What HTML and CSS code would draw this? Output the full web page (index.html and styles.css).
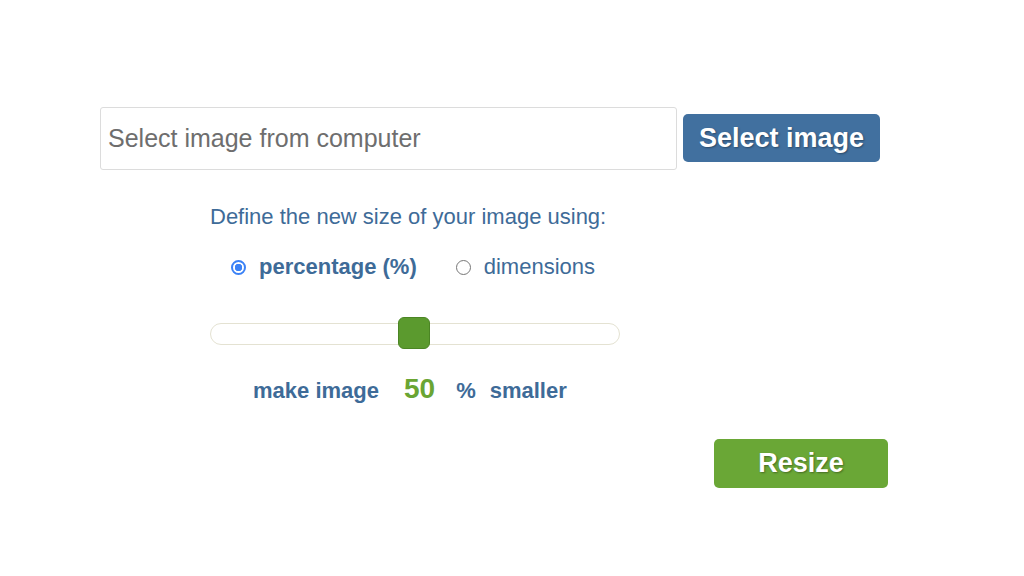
FILE: index.html
```html
<!DOCTYPE html>
<html>
<head>
<meta charset="utf-8">
<link rel="stylesheet" href="styles.css">
</head>
<body>
<div class="page">
  <div class="file-row">
    <div class="file-input">Select image from computer</div>
    <button class="btn btn-blue">Select image</button>
  </div>
  <div class="options">
    <div class="define">Define the new size of your image using:</div>
    <div class="radios">
      <label class="radio-item"><span class="radio checked"></span><span class="bold">percentage (%)</span></label>
      <label class="radio-item second"><span class="radio"></span><span>dimensions</span></label>
    </div>
    <div class="slider">
      <div class="track"></div>
      <div class="thumb"></div>
    </div>
    <div class="result">
      <span class="bold">make image</span>
      <span class="num">50</span>
      <span class="bold">%</span>
      <span class="bold">smaller</span>
    </div>
  </div>
  <div class="actions">
    <button class="btn btn-green">Resize</button>
  </div>
</div>
</body>
</html>
```
FILE: styles.css
```css
html, body {
  margin: 0;
  padding: 0;
  background: #ffffff;
  font-family: "Liberation Sans", Arial, sans-serif;
}
.page {
  padding: 107px 0 0 100px;
  width: 800px;
}
.file-row {
  display: flex;
  align-items: center;
  gap: 6px;
}
.file-input {
  box-sizing: border-box;
  width: 577px;
  height: 63px;
  border: 1px solid #dcdcdc;
  border-radius: 3px;
  padding-left: 7px;
  display: flex;
  align-items: center;
  font-size: 25px;
  color: #6e6e6e;
}
.btn {
  border: none;
  border-radius: 5px;
  color: #ffffff;
  font-family: "Liberation Sans", Arial, sans-serif;
  font-weight: bold;
  font-size: 27px;
  text-shadow: 1px 1px 2px rgba(0,0,0,0.35);
  cursor: pointer;
  padding: 0;
}
.btn-blue {
  background: #41709f;
  width: 197px;
  height: 48px;
  margin-top: -1px;
}
.options {
  margin-left: 110px;
  margin-top: 34px;
  color: #3e6b98;
  font-size: 22px;
}
.define {
  line-height: 26px;
}
.radios {
  display: flex;
  margin-top: 24px;
  margin-left: 21px;
  align-items: center;
  height: 26px;
}
.radio-item {
  display: flex;
  align-items: center;
  gap: 13px;
}
.radio-item.second {
  margin-left: 39px;
}
.radio {
  box-sizing: border-box;
  width: 15px;
  height: 15px;
  border-radius: 50%;
  border: 1px solid #767676;
  background: #fff;
}
.radio.checked {
  border: 2px solid #3b82f6;
  background: radial-gradient(circle, #3b82f6 0 3.5px, #fff 4px);
}
.bold {
  font-weight: bold;
}
.slider {
  position: relative;
  width: 410px;
  height: 32px;
  margin-top: 37px;
  display: flex;
  align-items: center;
}
.track {
  box-sizing: border-box;
  width: 410px;
  height: 22px;
  margin-top: 2px;
  border: 1px solid #e4e2d2;
  border-radius: 11px;
  background: #fff;
}
.thumb {
  position: absolute;
  left: 188px;
  top: 0;
  box-sizing: border-box;
  width: 32px;
  height: 32px;
  background: #5b9a2e;
  border: 1px solid #4b8524;
  border-radius: 6px;
}
.result {
  display: flex;
  align-items: baseline;
  margin-top: 24px;
  margin-left: 43px;
  font-size: 22px;
  height: 30px;
}
.result .num {
  font-weight: bold;
  color: #6aa533;
  font-size: 28px;
  margin-left: 25px;
  margin-right: 21px;
}
.result .bold + .bold {
  margin-left: 14px;
}
.actions {
  display: flex;
  justify-content: flex-end;
  width: 788px;
  margin-top: 36px;
}
.btn-green {
  background: #6aa736;
  width: 174px;
  height: 49px;
}
```
